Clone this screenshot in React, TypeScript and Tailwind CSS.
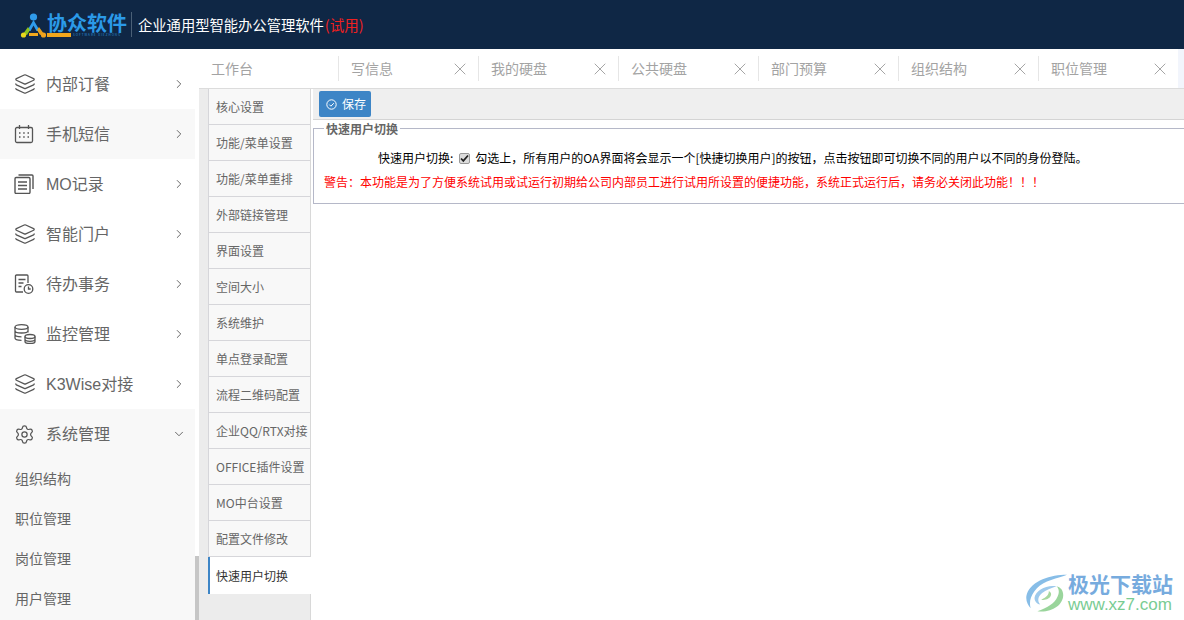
import { ChevronDown, ChevronRight, Layers, Settings, X } from 'lucide-react';
import type { ReactNode } from 'react';

const cjk = { fontFamily: '"Noto Sans CJK SC", "Liberation Sans", sans-serif' };
const latinFirst = { fontFamily: '"Liberation Sans", "Noto Sans CJK SC", sans-serif' };

// full-width punctuation, written as escapes so it cannot get normalised
const switchHint =
  '\u52FE\u9009\u4E0A\uFF0C\u6240\u6709\u7528\u6237\u7684OA\u754C\u9762\u5C06\u4F1A\u663E\u793A\u4E00\u4E2A[\u5FEB\u6377\u5207\u6362\u7528\u6237]\u7684\u6309\u94AE\uFF0C\u70B9\u51FB\u6309\u94AE\u5373\u53EF\u5207\u6362\u4E0D\u540C\u7684\u7528\u6237\u4EE5\u4E0D\u540C\u7684\u8EAB\u4EFD\u767B\u9646\u3002';
const warning =
  '\u8B66\u544A\uFF1A\u672C\u529F\u80FD\u662F\u4E3A\u4E86\u65B9\u4FBF\u7CFB\u7EDF\u8BD5\u7528\u6216\u8BD5\u8FD0\u884C\u521D\u671F\u7ED9\u516C\u53F8\u5185\u90E8\u5458\u5DE5\u8FDB\u884C\u8BD5\u7528\u6240\u8BBE\u7F6E\u7684\u4FBF\u6377\u529F\u80FD\uFF0C\u7CFB\u7EDF\u6B63\u5F0F\u8FD0\u884C\u540E\uFF0C\u8BF7\u52A1\u5FC5\u5173\u95ED\u6B64\u529F\u80FD\uFF01\uFF01\uFF01';

function CalendarIcon() {
  return (
    <svg width="20" height="20" viewBox="0 0 20 20" fill="none" stroke="#555" strokeWidth="1.3">
      <rect x="1.5" y="3.5" width="17" height="15" rx="1.5" />
      <path d="M5.5 1v4M14.5 1v4" />
      <path d="M5 9h1.5M9.2 9h1.5M13.5 9h1.5M5 13h1.5M9.2 13h1.5M13.5 13h1.5" strokeWidth="1.6" />
    </svg>
  );
}

function RecordIcon() {
  return (
    <svg width="20" height="20" viewBox="0 0 20 20" fill="none" stroke="#555" strokeWidth="1.4">
      <rect x="1" y="3.5" width="15" height="16" rx="1.2" />
      <path d="M4.5 1h13.5a1 1 0 0 1 1 1v13" />
      <path d="M4 8h9M4 11.5h9M4 15h9" />
    </svg>
  );
}

function TodoIcon() {
  return (
    <svg width="20" height="20" viewBox="0 0 20 20" fill="none" stroke="#555" strokeWidth="1.3">
      <path d="M9 18H2.5a1 1 0 0 1-1-1V2a1 1 0 0 1 1-1H13a1 1 0 0 1 1 1v7" />
      <path d="M4.5 5.5h7M4.5 9h5M4.5 12.5h3" />
      <circle cx="14.5" cy="15" r="4.3" />
      <path d="M14.5 12.5V15h2.2" />
    </svg>
  );
}

function DatabaseIcon() {
  return (
    <svg width="22" height="20" viewBox="0 0 22 20" fill="none" stroke="#555" strokeWidth="1.3">
      <ellipse cx="7.5" cy="3" rx="6.5" ry="2.3" />
      <path d="M1 3v11c0 1.3 2.9 2.3 6.5 2.3M14 3v5.5M1 6.7c0 1.3 2.9 2.3 6.5 2.3S14 8 14 6.7M1 10.5c0 1.3 2.9 2.3 6.5 2.3" />
      <ellipse cx="16" cy="12.5" rx="5" ry="2" />
      <path d="M11 12.5v5c0 1.1 2.2 2 5 2s5-.9 5-2v-5M11 15.3c0 1.1 2.2 2 5 2s5-.9 5-2" />
    </svg>
  );
}

const layers = <Layers size={22} strokeWidth={1.4} color="#555" />;

const menu: { name: string; icon: ReactNode; active?: boolean }[] = [
  { name: '内部订餐', icon: layers },
  { name: '手机短信', icon: <CalendarIcon />, active: true },
  { name: 'MO记录', icon: <RecordIcon /> },
  { name: '智能门户', icon: layers },
  { name: '待办事务', icon: <TodoIcon /> },
  { name: '监控管理', icon: <DatabaseIcon /> },
  { name: 'K3Wise对接', icon: layers },
];

const subMenu = ['组织结构', '职位管理', '岗位管理', '用户管理'];
const tabs = ['写信息', '我的硬盘', '公共硬盘', '部门预算', '组织结构', '职位管理'];
const sideTabs = [
  '核心设置',
  '功能/菜单设置',
  '功能/菜单重排',
  '外部链接管理',
  '界面设置',
  '空间大小',
  '系统维护',
  '单点登录配置',
  '流程二维码配置',
  '企业QQ/RTX对接',
  'OFFICE插件设置',
  'MO中台设置',
  '配置文件修改',
];

function Logo() {
  return (
    <div className="flex items-center">
      <svg width="27" height="26" viewBox="0 0 27 26">
        <circle cx="13.5" cy="5" r="3.6" fill="#2f9bea" />
        <path d="M13.5 8 L7 19 L10.5 19 L13.5 13.5 L16.5 19 L20 19 Z" fill="#2f9bea" />
        <path d="M3 22 L8 15 L10 18 L7 23 Z" fill="#8ec21f" />
        <path d="M9 21 h9 v3 h-9 Z" fill="#f2a81d" />
        <path d="M24 22 L19 15 L17 18 L20 23 Z" fill="#e9a11a" />
        <circle cx="3.5" cy="23" r="2.6" fill="#e8d81c" />
        <circle cx="23.5" cy="23" r="2.6" fill="#f2a31d" />
      </svg>
      <div className="flex w-[80px] flex-col">
        <span className="text-[20px] leading-[20px] font-bold text-[#2b9ae8]">协众软件</span>
        <div className="flex h-[4px] items-center gap-[2px]">
          <span className="h-[4px] w-[24px] shrink-0 bg-[#f0a61c]" />
          <span className="text-[3px] leading-[4px] tracking-[1px] whitespace-nowrap text-[#2b8fd8]">SOFTWARE XIEZHONG</span>
        </div>
      </div>
    </div>
  );
}

function Sidebar() {
  return (
    <aside className="relative w-[199px] shrink-0 bg-white pt-[10px]" style={latinFirst}>
      <div className="w-[195px]">
        {menu.map((item) => (
          <div
            key={item.name}
            className={`flex h-[50px] items-center pl-[14px] pr-[9px] text-[16px] text-[#666] ${item.active ? 'bg-[#f8f8f8]' : ''}`}
          >
            <span className="flex w-[32px] shrink-0">{item.icon}</span>
            <span className="flex-1 pt-[1px]">{item.name}</span>
            <ChevronRight size={14} strokeWidth={1.5} color="#555" />
          </div>
        ))}
        <div className="bg-[#f8f8f8] pb-[10px]">
          <div className="flex h-[50px] items-center pl-[14px] pr-[9px] text-[16px] text-[#666]">
            <span className="flex w-[32px] shrink-0">
              <Settings size={21} strokeWidth={1.4} color="#555" />
            </span>
            <span className="flex-1 pt-[1px]">系统管理</span>
            <ChevronDown size={14} strokeWidth={1.5} color="#555" />
          </div>
          {subMenu.map((name) => (
            <div key={name} className="flex h-[40px] items-center pl-[15px] text-[14px] text-[#666]">
              {name}
            </div>
          ))}
        </div>
      </div>
      <div className="absolute right-0 bottom-0 h-[64px] w-[4px] bg-[#c6c6c6]" />
    </aside>
  );
}

function TabBar() {
  return (
    <div className="flex h-[40px] shrink-0 border-b border-[#dcdcdc] bg-[#f2f5fc]">
      <div className="flex h-[39px] w-[979px] items-center bg-white">
        <div className="flex h-[25px] w-[139px] items-center pl-[12px] text-[14px] text-[#a3a3a3]">工作台</div>
        {tabs.map((tab) => (
          <div key={tab} className="flex h-[25px] w-[140px] items-center justify-between border-l border-[#e6e6e6] pl-[12px] pr-[8px] text-[14px] text-[#a3a3a3]">
            <span>{tab}</span>
            <X size={20} strokeWidth={0.8} color="#777" />
          </div>
        ))}
      </div>
    </div>
  );
}

function SideTabs() {
  return (
    <div className="flex w-[112px] shrink-0 flex-col border-r border-[#d8d8d8] bg-[#ececec] pl-[9px]">
      {sideTabs.map((name) => (
        <div key={name} className="flex h-[36px] shrink-0 items-center whitespace-nowrap border-b border-l border-[#d6d6da] bg-[#f8f8f8] pl-[7px] text-[12px] text-[#666]">
          {name}
        </div>
      ))}
      <div className="-mr-[1px] flex h-[37px] shrink-0 items-center border-l-2 border-[#3d85c6] bg-white pl-[6px] text-[12px] text-[#333]">
        快速用户切换
      </div>
    </div>
  );
}

function Content() {
  return (
    <div className="min-w-0 flex-1 pl-[2px]">
      <div className="flex h-[31px] items-center border-b border-[#d4d4d4] bg-[#efefef] pl-[6px]">
        <button className="flex h-[26px] w-[52px] items-center gap-[5px] rounded-[2px] bg-[#3d85c6] pl-[7px] text-[12px] text-white">
          <svg width="11" height="11" viewBox="0 0 11 11" fill="none" stroke="#fff" strokeWidth="1">
            <circle cx="5.5" cy="5.5" r="4.7" />
            <path d="M3.3 5.6l1.6 1.6 2.9-3" />
          </svg>
          保存
        </button>
      </div>
      <fieldset className="h-[84px] min-w-0 border border-r-0 border-[#b5b8c8] px-[10px]">
        <legend className="px-[2px] text-[12px] leading-[17px] font-bold text-[#666]">快速用户切换</legend>
        <div className="mt-[11px] flex h-[20px] items-center pl-[54px] text-[12px] text-black">
          <span>快速用户切换:</span>
          <span className="ml-[6px] mr-[5px] flex h-[11px] w-[11px] items-center justify-center rounded-[2px] border border-[#999] bg-[#ddd]">
            <svg width="9" height="9" viewBox="0 0 9 9" fill="none" stroke="#222" strokeWidth="1.7">
              <path d="M1 4.5l2.3 2.4L8 1.5" />
            </svg>
          </span>
          <span>{switchHint}</span>
        </div>
        <div className="mt-[4px] text-[12px] leading-[20px] text-[#ff0000]">{warning}</div>
      </fieldset>
    </div>
  );
}

function Watermark() {
  return (
    <div className="absolute right-[11px] bottom-[6px] flex items-center opacity-75">
      <svg width="44" height="42" viewBox="0 0 46 42" fill="none">
        <path d="M45 2C28 2 8 8 3 22c-2 6 1 12 4 15C4 28 10 15 24 9 32 6 40 4 45 2Z" fill="#5fa8e0" />
        <path d="M34 14C24 12 12 18 11 26c0 4 3 7 6 7-3-3-3-8 2-12 4-3 9-5 15-7Z" fill="#7db8e6" />
        <path d="M14 40c14 2 27-6 27-17 0-5-3-8-7-9 3 3 3 7 1 11-3 7-11 12-21 15Z" fill="#79c77c" />
        <path d="M18 28c4 1 9-1 10-4 1-2 0-4-2-5 0 4-3 7-8 9Z" fill="#8acb7e" />
      </svg>
      <div className="flex w-[105px] flex-col">
        <span className="text-[21px] leading-[25px] font-bold text-[#4a90d4]">极光下载站</span>
        <span className="text-[17px] leading-[18px] text-[#4dbb70]" style={{ fontFamily: '"Liberation Sans", sans-serif' }}>
          www.xz7.com
        </span>
      </div>
    </div>
  );
}

export default function App() {
  return (
    <div className="relative flex h-[620px] w-[1184px] flex-col overflow-hidden bg-white" style={cjk}>
      <header className="flex h-[49px] shrink-0 items-center bg-[#0f2745] pl-[20px]">
        <Logo />
        <span className="ml-[4px] mr-[6px] h-[25px] w-px bg-[#4a6077]" />
        <span className="text-[14.3px] text-white">企业通用型智能办公管理软件</span>
        <span className="ml-[1px] text-[14.5px] text-[#f02020]">(试用)</span>
      </header>
      <div className="flex min-h-0 flex-1">
        <Sidebar />
        <main className="flex min-w-0 flex-1 flex-col">
          <TabBar />
          <div className="flex min-h-0 flex-1">
            <SideTabs />
            <Content />
          </div>
        </main>
      </div>
      <Watermark />
    </div>
  );
}
